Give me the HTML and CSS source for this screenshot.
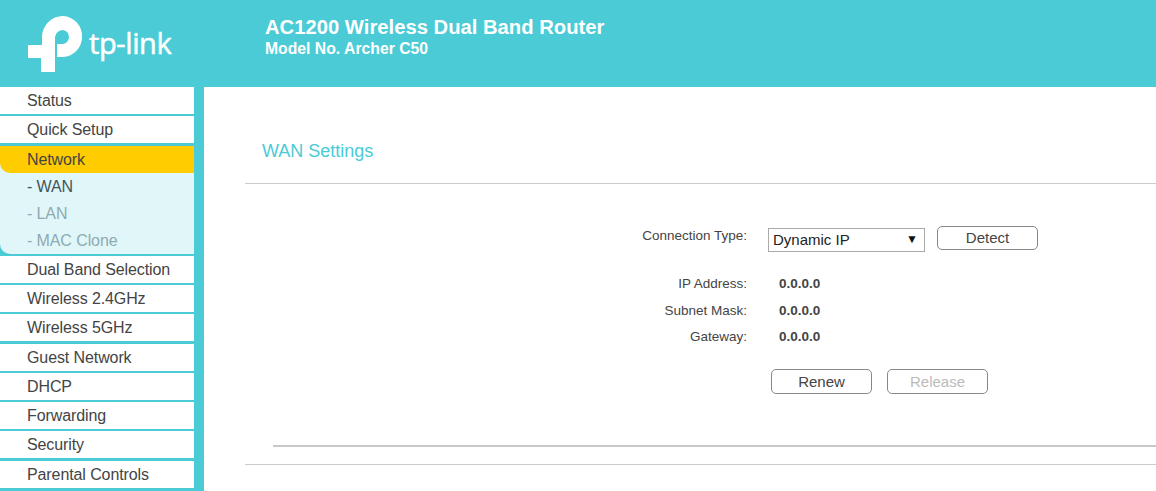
FILE: index.html
```html
<!DOCTYPE html>
<html lang="en">
<head>
<meta charset="utf-8">
<title>TP-Link Archer C50</title>
<link rel="stylesheet" href="styles.css">
</head>
<body>
<header class="top">
  <div class="logo">
    <svg class="mark" width="56" height="58" viewBox="0 0 56 58">
      <path fill="#fff" d="M14 29V21A21 21 0 0 1 35 0A20 20 0 0 1 54 21A20 20 0 0 1 35 41H29V28H35A7 7 0 0 0 41 21A7 7 0 0 0 35 14A8 8 0 0 0 27 21V56H13V42H0V29Z"/>
    </svg>
    <span class="brand">tp-link</span>
  </div>
  <div class="title">
    <div class="product">AC1200 Wireless Dual Band Router</div>
    <div class="model">Model No. Archer C50</div>
  </div>
</header>
<div class="body">
  <nav class="side">
    <a class="item">Status</a>
    <a class="item wide">Quick Setup</a>
    <div class="group">
      <a class="current">Network</a>
      <a class="sub on">- WAN</a>
      <a class="sub">- LAN</a>
      <a class="sub">- MAC Clone</a>
    </div>
    <a class="item">Dual Band Selection</a>
    <a class="item">Wireless 2.4GHz</a>
    <a class="item wide">Wireless 5GHz</a>
    <a class="item">Guest Network</a>
    <a class="item">DHCP</a>
    <a class="item">Forwarding</a>
    <a class="item wide">Security</a>
    <a class="item">Parental Controls</a>
  </nav>
  <main class="main">
    <h1 class="head">WAN Settings</h1>
    <hr class="rule">
    <div class="form">
      <div class="row row-type">
        <span class="lab">Connection Type:</span>
        <div class="select"><span>Dynamic IP</span><span class="arrow">▼</span></div>
        <button class="btn detect">Detect</button>
      </div>
      <div class="row row-info tall"><span class="lab">IP Address:</span><b class="val">0.0.0.0</b></div>
      <div class="row row-info"><span class="lab">Subnet Mask:</span><b class="val">0.0.0.0</b></div>
      <div class="row row-info"><span class="lab">Gateway:</span><b class="val">0.0.0.0</b></div>
      <div class="actions">
        <button class="btn">Renew</button>
        <button class="btn off">Release</button>
      </div>
    </div>
    <hr class="rule2">
    <hr class="rule3">
  </main>
</div>
</body>
</html>
```
FILE: styles.css
```css
* { box-sizing: border-box; }
html, body { margin: 0; height: 491px; overflow: hidden; }
body { background: #4acbd6; font-family: "Liberation Sans", Arial, sans-serif; color: #444; }
.top { height: 87px; display: flex; background: #4acbd6; color: #fff; }
.logo { width: 265px; position: relative; }
.mark { position: absolute; left: 28px; top: 16px; }
.brand { position: absolute; left: 89px; top: 23px; font: 400 29px/40px "Open Sans", sans-serif; letter-spacing: -0.4px; color: #fff; -webkit-text-stroke: 0.5px #fff; }
.title { padding-top: 15px; }
.product { font-size: 20.24px; font-weight: 700; line-height: 24px; }
.model { font-size: 15.75px; font-weight: 700; line-height: 19px; }
.body { display: flex; height: 404px; }
.side { width: 204px; flex: none; padding-right: 10px; }
.item, .current, .sub { display: block; font-size: 16px; letter-spacing: -0.1px; padding-left: 27px; color: #444; }
.item { background: #fff; height: 27px; line-height: 27px; margin-bottom: 2px; }
.item.wide { margin-bottom: 3px; }
.group { background: #e1f6f9; border-radius: 0 0 0 10px; margin-bottom: 2px; height: 108px; }
.current { background: #ffcc00; height: 27px; line-height: 27px; border-radius: 0 0 0 10px; }
.sub { height: 27px; line-height: 27px; color: #8eabb0; }
.sub.on { color: #40555c; }
.main { flex: 1; background: #fff; padding-left: 41px; position: relative; }
.head { margin: 0; padding: 53px 0 0 17px; font-size: 18px; font-weight: 400; color: #4acbd6; line-height: 22px; height: 96px; }
.rule, .rule2, .rule3 { border: 0; margin: 0; height: 1px; background: #ccc; }
.form { height: 261px; padding-top: 37px; }
.row { display: flex; align-items: center; font-size: 13.5px; }
.lab { width: 502px; text-align: right; color: #444; }
.row-type { height: 34px; margin-bottom: 15px; }
.row-type .lab { margin-top: -6px; }
.row-info { height: 26px; }
.row-info.tall { height: 27px; }
.val { margin-left: 32px; color: #444; }
.select { width: 157px; height: 24px; margin-left: 21px; margin-top: 4px; border: 1px solid #aaa; display: flex; justify-content: space-between; align-items: center; padding: 0 4px 2px; font-size: 15px; color: #222; }
.arrow { font-size: 12px; color: #111; padding-right: 2px; }
.btn { width: 101px; height: 25px; background: #fff; border: 1px solid #888; border-radius: 5px; font: 15px "Liberation Sans", Arial, sans-serif; color: #444; padding: 0; }
.detect { height: 24px; margin-left: 12px; padding-bottom: 2px; }
.actions { display: flex; gap: 15px; padding-left: 526px; margin-top: 20px; }
.off { color: #bbb; }
.rule2 { height: 2px; margin-left: 28px; background: #c8c8c8; }
.rule3 { margin-top: 17px; }
```
